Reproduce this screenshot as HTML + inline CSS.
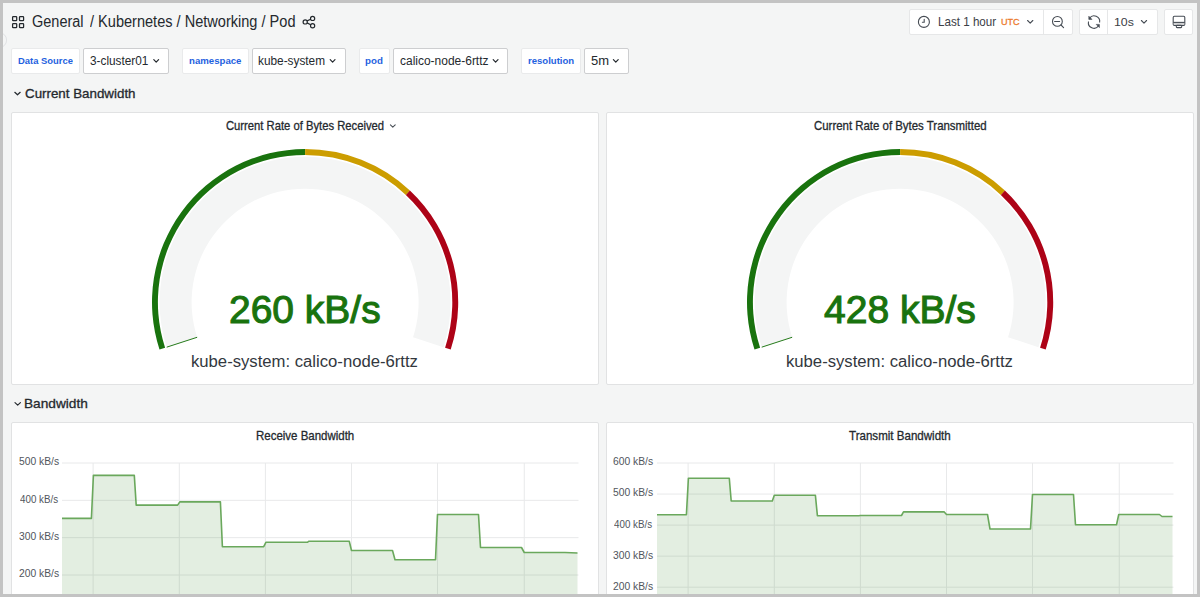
<!DOCTYPE html>
<html><head><meta charset="utf-8"><title>Kubernetes / Networking / Pod</title><style>
html,body{margin:0;padding:0}
body{width:1200px;height:597px;position:relative;overflow:hidden;background:#f4f5f5;font-family:"Liberation Sans",sans-serif}
.panel{position:absolute;box-sizing:border-box;background:#fff;border:1px solid #e1e2e3;border-radius:2px}
.lbl{position:absolute;top:48px;height:26px;box-sizing:border-box;background:#fff;border:1px solid #e9eaeb;border-radius:2px}
.sel{position:absolute;top:48px;height:26px;box-sizing:border-box;background:#fff;border:1px solid #cdced0;border-radius:2px}
.btn{position:absolute;top:9px;height:26px;box-sizing:border-box;background:#fff;border:1px solid #e6e7e8;border-radius:2px}
.bdiv{position:absolute;top:9px;height:26px;width:1px;background:#e6e7e8}
.t{position:absolute;white-space:nowrap;transform-origin:0 0}
svg{position:absolute;left:0;top:0}
.frame{position:absolute;background:#c3c3c3}
</style></head>
<body>
<div class="panel" style="left:11px;top:112px;width:588px;height:273px"></div>
<div class="panel" style="left:606px;top:112px;width:588px;height:273px"></div>
<div class="panel" style="left:11px;top:422px;width:588px;height:200px"></div>
<div class="panel" style="left:606px;top:422px;width:588px;height:200px"></div>
<div class="lbl" style="left:11px;width:68.5px"></div>
<div class="sel" style="left:83px;width:86px"></div>
<div class="lbl" style="left:182px;width:66.5px"></div>
<div class="sel" style="left:252px;width:94px"></div>
<div class="lbl" style="left:358.5px;width:31.0px"></div>
<div class="sel" style="left:393px;width:115px"></div>
<div class="lbl" style="left:521px;width:59.5px"></div>
<div class="sel" style="left:584px;width:44.5px"></div>
<div class="btn" style="left:909px;width:163.5px"></div>
<div class="bdiv" style="left:1042.8px"></div>
<div class="btn" style="left:1079px;width:78.5px"></div>
<div class="bdiv" style="left:1107.0px"></div>
<div class="btn" style="left:1164px;width:28.5px"></div>
<svg width="1200" height="597" viewBox="0 0 1200 597">
<path d="M166.72,347.16 A145.50,145.50 0 1 1 443.48,347.16 L413.04,337.27 A113.50,113.50 0 1 0 197.16,337.27 Z" fill="#f4f5f5"/>
<path d="M159.49,349.51 A153.10,153.10 0 0 1 305.10,149.10 L305.10,155.00 A147.20,147.20 0 0 0 165.10,347.69 Z" fill="#19730e"/>
<path d="M305.10,149.10 A153.10,153.10 0 0 1 409.90,190.59 L405.87,194.90 A147.20,147.20 0 0 0 305.10,155.00 Z" fill="#cc9d00"/>
<path d="M409.90,190.59 A153.10,153.10 0 0 1 450.71,349.51 L445.10,347.69 A147.20,147.20 0 0 0 405.87,194.90 Z" fill="#ad0317"/>
<line x1="197.16" y1="337.27" x2="166.72" y2="347.16" stroke="#19730e" stroke-width="0.95"/>
<path d="M761.72,347.16 A145.50,145.50 0 1 1 1038.48,347.16 L1008.04,337.27 A113.50,113.50 0 1 0 792.16,337.27 Z" fill="#f4f5f5"/>
<path d="M754.49,349.51 A153.10,153.10 0 0 1 900.10,149.10 L900.10,155.00 A147.20,147.20 0 0 0 760.10,347.69 Z" fill="#19730e"/>
<path d="M900.10,149.10 A153.10,153.10 0 0 1 1004.90,190.59 L1000.87,194.90 A147.20,147.20 0 0 0 900.10,155.00 Z" fill="#cc9d00"/>
<path d="M1004.90,190.59 A153.10,153.10 0 0 1 1045.71,349.51 L1040.10,347.69 A147.20,147.20 0 0 0 1000.87,194.90 Z" fill="#ad0317"/>
<line x1="792.16" y1="337.27" x2="761.72" y2="347.16" stroke="#19730e" stroke-width="0.95"/>
<line x1="62.0" y1="463.00" x2="578.5" y2="463.00" stroke="#e8e9ea" stroke-width="1"/>
<line x1="62.0" y1="500.33" x2="578.5" y2="500.33" stroke="#e8e9ea" stroke-width="1"/>
<line x1="62.0" y1="537.67" x2="578.5" y2="537.67" stroke="#e8e9ea" stroke-width="1"/>
<line x1="62.0" y1="575.00" x2="578.5" y2="575.00" stroke="#e8e9ea" stroke-width="1"/>
<line x1="93.10" y1="463.00" x2="93.10" y2="600" stroke="#e8e9ea" stroke-width="1"/>
<line x1="179.30" y1="463.00" x2="179.30" y2="600" stroke="#e8e9ea" stroke-width="1"/>
<line x1="265.40" y1="463.00" x2="265.40" y2="600" stroke="#e8e9ea" stroke-width="1"/>
<line x1="351.50" y1="463.00" x2="351.50" y2="600" stroke="#e8e9ea" stroke-width="1"/>
<line x1="437.50" y1="463.00" x2="437.50" y2="600" stroke="#e8e9ea" stroke-width="1"/>
<line x1="524.25" y1="463.00" x2="524.25" y2="600" stroke="#e8e9ea" stroke-width="1"/>
<path d="M62.00,600 L62.00,518.40 L91.40,518.40 L93.40,475.40 L134.30,475.40 L136.20,505.10 L177.60,505.10 L179.80,501.90 L220.40,501.90 L222.40,546.70 L263.70,546.70 L265.90,542.30 L307.30,542.30 L309.00,541.20 L349.25,541.20 L351.50,550.50 L392.50,550.50 L395.00,559.75 L435.50,559.75 L437.50,514.50 L478.50,514.50 L480.50,547.50 L521.50,547.50 L524.25,552.50 L565.00,552.50 L577.50,553.00 L577.50,600 Z" fill="#37872d" fill-opacity="0.14"/>
<polyline points="62.00,518.40 91.40,518.40 93.40,475.40 134.30,475.40 136.20,505.10 177.60,505.10 179.80,501.90 220.40,501.90 222.40,546.70 263.70,546.70 265.90,542.30 307.30,542.30 309.00,541.20 349.25,541.20 351.50,550.50 392.50,550.50 395.00,559.75 435.50,559.75 437.50,514.50 478.50,514.50 480.50,547.50 521.50,547.50 524.25,552.50 565.00,552.50 577.50,553.00" fill="none" stroke="#6aa85c" stroke-width="1.6" stroke-linejoin="round"/>
<line x1="657.0" y1="463.00" x2="1173.5" y2="463.00" stroke="#e8e9ea" stroke-width="1"/>
<line x1="657.0" y1="494.05" x2="1173.5" y2="494.05" stroke="#e8e9ea" stroke-width="1"/>
<line x1="657.0" y1="525.10" x2="1173.5" y2="525.10" stroke="#e8e9ea" stroke-width="1"/>
<line x1="657.0" y1="556.15" x2="1173.5" y2="556.15" stroke="#e8e9ea" stroke-width="1"/>
<line x1="657.0" y1="587.20" x2="1173.5" y2="587.20" stroke="#e8e9ea" stroke-width="1"/>
<line x1="688.10" y1="463.00" x2="688.10" y2="600" stroke="#e8e9ea" stroke-width="1"/>
<line x1="774.30" y1="463.00" x2="774.30" y2="600" stroke="#e8e9ea" stroke-width="1"/>
<line x1="860.40" y1="463.00" x2="860.40" y2="600" stroke="#e8e9ea" stroke-width="1"/>
<line x1="946.50" y1="463.00" x2="946.50" y2="600" stroke="#e8e9ea" stroke-width="1"/>
<line x1="1032.50" y1="463.00" x2="1032.50" y2="600" stroke="#e8e9ea" stroke-width="1"/>
<line x1="1119.25" y1="463.00" x2="1119.25" y2="600" stroke="#e8e9ea" stroke-width="1"/>
<path d="M657.00,600 L657.00,514.70 L686.40,514.70 L688.40,478.30 L729.30,478.30 L731.20,501.00 L772.30,501.00 L774.30,495.30 L815.40,495.30 L817.40,515.70 L858.70,515.70 L860.40,515.50 L901.50,515.50 L903.50,511.90 L944.25,511.90 L946.50,514.50 L987.50,514.50 L990.00,529.00 L1030.50,529.00 L1032.50,494.50 L1073.50,494.50 L1075.50,524.75 L1116.50,524.75 L1118.75,514.50 L1159.50,514.50 L1162.00,516.50 L1172.50,516.50 L1172.50,600 Z" fill="#37872d" fill-opacity="0.14"/>
<polyline points="657.00,514.70 686.40,514.70 688.40,478.30 729.30,478.30 731.20,501.00 772.30,501.00 774.30,495.30 815.40,495.30 817.40,515.70 858.70,515.70 860.40,515.50 901.50,515.50 903.50,511.90 944.25,511.90 946.50,514.50 987.50,514.50 990.00,529.00 1030.50,529.00 1032.50,494.50 1073.50,494.50 1075.50,524.75 1116.50,524.75 1118.75,514.50 1159.50,514.50 1162.00,516.50 1172.50,516.50" fill="none" stroke="#6aa85c" stroke-width="1.6" stroke-linejoin="round"/>
<rect x="12.6" y="16.6" width="4.1" height="4.1" rx="0.7" fill="none" stroke="#24292e" stroke-width="1.25"/>
<rect x="19.5" y="16.6" width="4.1" height="4.1" rx="0.7" fill="none" stroke="#24292e" stroke-width="1.25"/>
<rect x="12.6" y="23.5" width="4.1" height="4.1" rx="0.7" fill="none" stroke="#24292e" stroke-width="1.25"/>
<rect x="19.5" y="23.5" width="4.1" height="4.1" rx="0.7" fill="none" stroke="#24292e" stroke-width="1.25"/>
<circle cx="305.2" cy="21.9" r="2.1" fill="none" stroke="#24292e" stroke-width="1.2"/>
<circle cx="312.6" cy="18.4" r="2.1" fill="none" stroke="#24292e" stroke-width="1.2"/>
<circle cx="312.6" cy="25.7" r="2.1" fill="none" stroke="#24292e" stroke-width="1.2"/>
<path d="M307.1,20.9 L310.7,19.3 M307.1,22.9 L310.7,24.7" stroke="#24292e" stroke-width="1.2"/>
<circle cx="923.9" cy="21.9" r="5.5" fill="none" stroke="#464c54" stroke-width="1.1"/>
<path d="M924.2,19.3 L924.2,22.2 L922.4,22.2" fill="none" stroke="#464c54" stroke-width="1.1" stroke-linecap="round"/>
<circle cx="1057.4" cy="21.4" r="4.9" fill="none" stroke="#464c54" stroke-width="1.1"/>
<path d="M1054.6,21.5 L1059.6,21.5 M1061,25 L1063.6,27.6" stroke="#464c54" stroke-width="1.1" stroke-linecap="round"/>
<path d="M1089.5,18.3 A5.6,5.6 0 0 1 1099.6,22.5 M1098.6,25.8 A5.6,5.6 0 0 1 1088.5,21.5" fill="none" stroke="#464c54" stroke-width="1.1"/>
<path d="M1088.8,16.2 L1088.8,19.4 L1092,19.4 Z M1099.4,27.6 L1099.4,24.4 L1096.2,24.4 Z" fill="#464c54" stroke="#464c54" stroke-width="0.6"/>
<rect x="1173.2" y="16.2" width="11.6" height="9.2" rx="1.2" fill="none" stroke="#464c54" stroke-width="1.1"/>
<rect x="1173.8" y="22.4" width="10.4" height="2.6" fill="#d0d1d3"/>
<path d="M1173.2,22.4 L1184.8,22.4" stroke="#464c54" stroke-width="1.1"/>
<rect x="1176.3" y="25.4" width="5.4" height="2.2" rx="0.8" fill="none" stroke="#464c54" stroke-width="1.1"/>
<path d="M1027.60,20.50 L1030.20,23.10 L1032.80,20.50" fill="none" stroke="#464c54" stroke-width="1.1" stroke-linecap="round" stroke-linejoin="round"/>
<path d="M1141.40,20.50 L1144.00,23.10 L1146.60,20.50" fill="none" stroke="#464c54" stroke-width="1.1" stroke-linecap="round" stroke-linejoin="round"/>
<path d="M153.80,59.60 L156.20,62.10 L158.60,59.60" fill="none" stroke="#24292e" stroke-width="1.2" stroke-linecap="round" stroke-linejoin="round"/>
<path d="M330.20,59.60 L332.60,62.10 L335.00,59.60" fill="none" stroke="#24292e" stroke-width="1.2" stroke-linecap="round" stroke-linejoin="round"/>
<path d="M493.20,59.60 L495.60,62.10 L498.00,59.60" fill="none" stroke="#24292e" stroke-width="1.2" stroke-linecap="round" stroke-linejoin="round"/>
<path d="M613.40,59.60 L615.80,62.10 L618.20,59.60" fill="none" stroke="#24292e" stroke-width="1.2" stroke-linecap="round" stroke-linejoin="round"/>
<path d="M14.80,92.30 L17.50,94.80 L20.20,92.30" fill="none" stroke="#24292e" stroke-width="1.2" stroke-linecap="round" stroke-linejoin="round"/>
<path d="M15.00,402.60 L17.70,405.10 L20.40,402.60" fill="none" stroke="#24292e" stroke-width="1.2" stroke-linecap="round" stroke-linejoin="round"/>
<path d="M390.40,124.80 L392.80,127.10 L395.20,124.80" fill="none" stroke="#464c54" stroke-width="1.05" stroke-linecap="round" stroke-linejoin="round"/>
<circle cx="-1" cy="40.1" r="7.6" fill="none" stroke="#dcdddf" stroke-width="0.8"/>
</svg>
<div class="t" style="left:31.87px;top:14.00px;font-size:15.6px;line-height:15.6px;font-weight:400;color:#24292e;transform:scaleX(0.9298);">General</div>
<div class="t" style="left:90.00px;top:14.00px;font-size:15.6px;line-height:15.6px;font-weight:400;color:#24292e;transform:scaleX(0.9333);">/ Kubernetes / Networking / Pod</div>
<div class="t" style="left:937.86px;top:15.70px;font-size:12.4px;line-height:12.4px;font-weight:400;color:#3b4046;transform:scaleX(0.9378);">Last 1 hour</div>
<div class="t" style="left:1001.05px;top:17.30px;font-size:9.6px;line-height:9.6px;font-weight:400;color:#ec7a2d;transform:scaleX(0.9481);-webkit-text-stroke:0.3px #ec7a2d;">UTC</div>
<div class="t" style="left:1114.15px;top:16.70px;font-size:11.8px;line-height:11.8px;font-weight:400;color:#3b4046;transform:scaleX(1.0455);">10s</div>
<div class="t" style="left:18.02px;top:56.40px;font-size:9.6px;line-height:9.6px;font-weight:700;color:#1f62e0;transform:scaleX(0.9819);">Data Source</div>
<div class="t" style="left:90.22px;top:55.40px;font-size:12.0px;line-height:12.0px;font-weight:400;color:#24292e;transform:scaleX(0.9829);">3-cluster01</div>
<div class="t" style="left:188.80px;top:56.40px;font-size:9.6px;line-height:9.6px;font-weight:700;color:#1f62e0;transform:scaleX(1.0041);">namespace</div>
<div class="t" style="left:258.02px;top:55.40px;font-size:12.0px;line-height:12.0px;font-weight:400;color:#24292e;transform:scaleX(0.9850);">kube-system</div>
<div class="t" style="left:364.79px;top:56.40px;font-size:9.6px;line-height:9.6px;font-weight:700;color:#1f62e0;transform:scaleX(1.0138);">pod</div>
<div class="t" style="left:400.00px;top:55.40px;font-size:12.0px;line-height:12.0px;font-weight:400;color:#24292e;transform:scaleX(0.9978);">calico-node-6rttz</div>
<div class="t" style="left:528.20px;top:56.40px;font-size:9.6px;line-height:9.6px;font-weight:700;color:#1f62e0;transform:scaleX(0.9957);">resolution</div>
<div class="t" style="left:590.72px;top:55.40px;font-size:12.0px;line-height:12.0px;font-weight:400;color:#24292e;transform:scaleX(1.0814);">5m</div>
<div class="t" style="left:24.77px;top:86.70px;font-size:13.0px;line-height:13.0px;font-weight:400;color:#24292e;transform:scaleX(1.0265);-webkit-text-stroke:0.3px #24292e;">Current Bandwidth</div>
<div class="t" style="left:23.95px;top:396.50px;font-size:13.0px;line-height:13.0px;font-weight:400;color:#24292e;transform:scaleX(1.0510);-webkit-text-stroke:0.3px #24292e;">Bandwidth</div>
<div class="t" style="left:225.91px;top:119.60px;font-size:12.6px;line-height:12.6px;font-weight:400;color:#24292e;transform:scaleX(0.8926);-webkit-text-stroke:0.3px #24292e;">Current Rate of Bytes Received</div>
<div class="t" style="left:813.69px;top:119.60px;font-size:12.6px;line-height:12.6px;font-weight:400;color:#24292e;transform:scaleX(0.9069);-webkit-text-stroke:0.3px #24292e;">Current Rate of Bytes Transmitted</div>
<div class="t" style="left:256.29px;top:429.80px;font-size:12.6px;line-height:12.6px;font-weight:400;color:#24292e;transform:scaleX(0.9114);-webkit-text-stroke:0.3px #24292e;">Receive Bandwidth</div>
<div class="t" style="left:849.20px;top:429.80px;font-size:12.6px;line-height:12.6px;font-weight:400;color:#24292e;transform:scaleX(0.9182);-webkit-text-stroke:0.3px #24292e;">Transmit Bandwidth</div>
<div class="t" style="left:229.23px;top:289.50px;font-size:39.5px;line-height:39.5px;font-weight:400;color:#19730e;transform:scaleX(0.9868);-webkit-text-stroke:1.1px #19730e;">260 kB/s</div>
<div class="t" style="left:824.01px;top:289.50px;font-size:39.5px;line-height:39.5px;font-weight:400;color:#19730e;transform:scaleX(0.9882);-webkit-text-stroke:1.1px #19730e;">428 kB/s</div>
<div class="t" style="left:191.16px;top:354.10px;font-size:16.0px;line-height:16.0px;font-weight:400;color:#33383e;transform:scaleX(1.0417);">kube-system: calico-node-6rttz</div>
<div class="t" style="left:786.16px;top:354.10px;font-size:16.0px;line-height:16.0px;font-weight:400;color:#33383e;transform:scaleX(1.0417);">kube-system: calico-node-6rttz</div>
<div class="t" style="left:18.58px;top:457.40px;font-size:10.1px;line-height:10.1px;font-weight:400;color:#50555c;transform:scaleX(1.0212);">500 kB/s</div>
<div class="t" style="left:19.60px;top:494.73px;font-size:10.1px;line-height:10.1px;font-weight:400;color:#50555c;transform:scaleX(0.9695);">400 kB/s</div>
<div class="t" style="left:18.58px;top:532.07px;font-size:10.1px;line-height:10.1px;font-weight:400;color:#50555c;transform:scaleX(1.0212);">300 kB/s</div>
<div class="t" style="left:18.60px;top:569.40px;font-size:10.1px;line-height:10.1px;font-weight:400;color:#50555c;transform:scaleX(1.0219);">200 kB/s</div>
<div class="t" style="left:613.40px;top:457.40px;font-size:10.1px;line-height:10.1px;font-weight:400;color:#50555c;transform:scaleX(1.0219);">600 kB/s</div>
<div class="t" style="left:613.38px;top:488.45px;font-size:10.1px;line-height:10.1px;font-weight:400;color:#50555c;transform:scaleX(1.0212);">500 kB/s</div>
<div class="t" style="left:614.40px;top:519.50px;font-size:10.1px;line-height:10.1px;font-weight:400;color:#50555c;transform:scaleX(0.9695);">400 kB/s</div>
<div class="t" style="left:613.38px;top:550.55px;font-size:10.1px;line-height:10.1px;font-weight:400;color:#50555c;transform:scaleX(1.0212);">300 kB/s</div>
<div class="t" style="left:613.40px;top:581.60px;font-size:10.1px;line-height:10.1px;font-weight:400;color:#50555c;transform:scaleX(1.0219);">200 kB/s</div>
<div class="frame" style="left:0;top:0;width:1200px;height:3px"></div>
<div class="frame" style="left:0;top:0;width:3px;height:597px"></div>
<div class="frame" style="left:1197px;top:0;width:3px;height:597px"></div>
<div class="frame" style="left:0;top:594px;width:1200px;height:3px"></div>
</body></html>
